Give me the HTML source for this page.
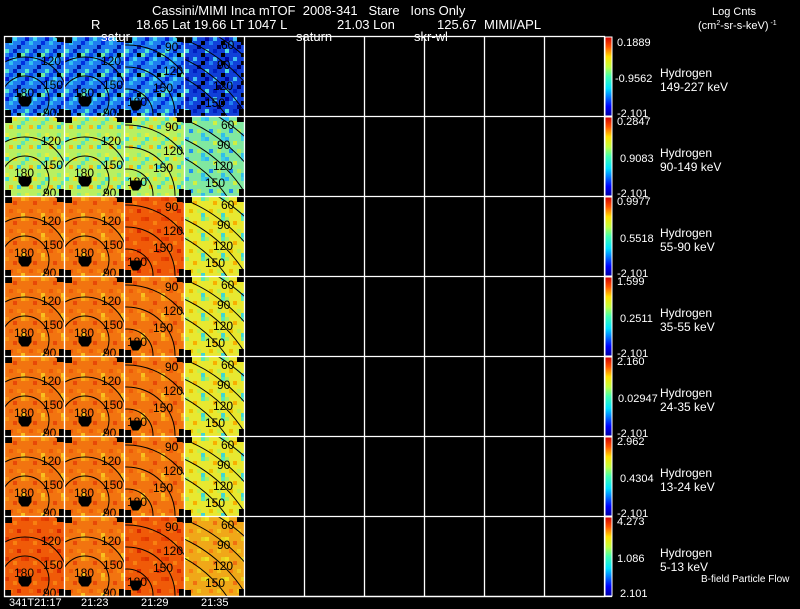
<!DOCTYPE html>
<html><head><meta charset="utf-8"><style>
html,body{margin:0;padding:0;background:#000;overflow:hidden;}
body{width:800px;height:609px;overflow:hidden;}
svg{display:block;}
svg text{font-family:"Liberation Sans",sans-serif;white-space:pre;}
</style></head><body>
<svg width="800" height="609" viewBox="0 0 800 609" xmlns="http://www.w3.org/2000/svg">
<defs>
<linearGradient id="jet" x1="0" y1="1" x2="0" y2="0">
<stop offset="0" stop-color="#0000a0"/><stop offset="0.12" stop-color="#0000ff"/>
<stop offset="0.35" stop-color="#00e0ff"/><stop offset="0.5" stop-color="#40ffb0"/>
<stop offset="0.62" stop-color="#c0ff40"/><stop offset="0.75" stop-color="#ffe000"/>
<stop offset="0.88" stop-color="#ff5000"/><stop offset="1" stop-color="#d00000"/>
</linearGradient>
<pattern id="nB" width="20" height="20" patternUnits="userSpaceOnUse">
<rect width="20" height="20" fill="#1f7df0"/>
<rect x="0" y="0" width="4" height="4" fill="#0018d0"/><rect x="8" y="0" width="4" height="4" fill="#40d8f0"/>
<rect x="16" y="4" width="4" height="4" fill="#0030e0"/><rect x="4" y="4" width="4" height="4" fill="#30c0f0"/>
<rect x="12" y="8" width="4" height="4" fill="#0010a0"/><rect x="0" y="12" width="4" height="4" fill="#50e8d0"/>
<rect x="8" y="12" width="4" height="4" fill="#0020c0"/><rect x="16" y="16" width="4" height="4" fill="#70f0a0"/>
<rect x="4" y="16" width="4" height="4" fill="#0040e8"/><rect x="12" y="16" width="4" height="4" fill="#000"/>
</pattern>
<pattern id="nD" width="20" height="20" patternUnits="userSpaceOnUse">
<rect width="20" height="20" fill="#1040d8"/>
<rect x="0" y="0" width="4" height="4" fill="#0008a0"/><rect x="8" y="0" width="4" height="4" fill="#40c0f0"/>
<rect x="16" y="4" width="4" height="4" fill="#000"/><rect x="4" y="4" width="4" height="4" fill="#2080f0"/>
<rect x="12" y="8" width="4" height="4" fill="#000060"/><rect x="0" y="12" width="4" height="4" fill="#50e0e0"/>
<rect x="8" y="12" width="4" height="4" fill="#0020c0"/><rect x="16" y="16" width="4" height="4" fill="#000"/>
</pattern>
<pattern id="nG" width="20" height="20" patternUnits="userSpaceOnUse">
<rect width="20" height="20" fill="#b8f060"/>
<rect x="0" y="0" width="4" height="4" fill="#40e0d0"/><rect x="8" y="0" width="4" height="4" fill="#f0e020"/>
<rect x="16" y="4" width="4" height="4" fill="#60e8b0"/><rect x="4" y="8" width="4" height="4" fill="#f8c010"/>
<rect x="12" y="8" width="4" height="4" fill="#30c8f0"/><rect x="0" y="16" width="4" height="4" fill="#e0f040"/>
<rect x="12" y="16" width="4" height="4" fill="#80f090"/>
</pattern>
<pattern id="nC" width="20" height="20" patternUnits="userSpaceOnUse">
<rect width="20" height="20" fill="#80e8a0"/>
<rect x="0" y="0" width="4" height="4" fill="#30b8f0"/><rect x="8" y="4" width="4" height="4" fill="#d0f040"/>
<rect x="16" y="0" width="4" height="4" fill="#40d0e0"/><rect x="4" y="12" width="4" height="4" fill="#2090f0"/>
<rect x="12" y="12" width="4" height="4" fill="#b0f060"/><rect x="16" y="16" width="4" height="4" fill="#30c0e8"/>
</pattern>
<pattern id="nY" width="20" height="20" patternUnits="userSpaceOnUse">
<rect width="20" height="20" fill="#e8e830"/>
<rect x="0" y="0" width="4" height="4" fill="#a8f060"/><rect x="8" y="4" width="4" height="4" fill="#f8b000"/>
<rect x="16" y="0" width="4" height="4" fill="#60e8b0"/><rect x="4" y="12" width="4" height="4" fill="#f0c000"/>
<rect x="12" y="12" width="4" height="4" fill="#c0f050"/><rect x="16" y="16" width="4" height="4" fill="#40d8d0"/>
</pattern>
<pattern id="nO" width="20" height="20" patternUnits="userSpaceOnUse">
<rect width="20" height="20" fill="#f27410"/>
<rect x="0" y="0" width="4" height="4" fill="#f89010"/><rect x="8" y="4" width="4" height="4" fill="#e84808"/>
<rect x="16" y="0" width="4" height="4" fill="#f8a818"/><rect x="4" y="12" width="4" height="4" fill="#ee5a08"/>
<rect x="12" y="12" width="4" height="4" fill="#f88a10"/><rect x="16" y="16" width="4" height="4" fill="#f8c020"/>
</pattern>
<pattern id="nR" width="20" height="20" patternUnits="userSpaceOnUse">
<rect width="20" height="20" fill="#f05a08"/>
<rect x="0" y="0" width="4" height="4" fill="#e03800"/><rect x="8" y="4" width="4" height="4" fill="#f88010"/>
<rect x="16" y="0" width="4" height="4" fill="#e84000"/><rect x="4" y="12" width="4" height="4" fill="#f07010"/>
<rect x="12" y="12" width="4" height="4" fill="#d82800"/>
</pattern>
<pattern id="nYO" width="20" height="20" patternUnits="userSpaceOnUse">
<rect width="20" height="20" fill="#f0a818"/>
<rect x="0" y="0" width="4" height="4" fill="#f0e020"/><rect x="8" y="4" width="4" height="4" fill="#f07010"/>
<rect x="16" y="0" width="4" height="4" fill="#e8d020"/><rect x="4" y="12" width="4" height="4" fill="#f88010"/>
<rect x="12" y="12" width="4" height="4" fill="#f0c820"/>
</pattern>
<g id="corn" fill="#000">
<rect x="0" y="0" width="7" height="6"/><rect x="52" y="0" width="8" height="5"/>
<rect x="0" y="73" width="6" height="7"/><rect x="54" y="72" width="6" height="8"/>
</g>
<g id="k1" fill="none" stroke="#000" stroke-width="1">
<circle cx="20" cy="63" r="24"/><circle cx="20" cy="63" r="43"/><circle cx="20" cy="63" r="70"/>
<path d="M14 60h12v5l-3 4h-6l-3-4z" fill="#000"/>
</g>
<g id="k1t" font-size="12" fill="#000" stroke="none">
<text x="36" y="28">120</text><text x="38" y="52">150</text><text x="9" y="60">180</text><text x="38" y="80">90</text>
</g>
<g id="k3" fill="none" stroke="#000" stroke-width="1">
<circle cx="2" cy="78" r="26"/><circle cx="2" cy="78" r="48"/><circle cx="2" cy="78" r="70"/><circle cx="2" cy="78" r="92"/>
<path d="M6 64h10v5l-3 4h-5l-2-4z" fill="#000"/>
</g>
<g id="k3t" font-size="12" fill="#000" stroke="none">
<text x="40" y="14">90</text><text x="38" y="38">120</text><text x="28" y="55">150</text><text x="2" y="69">180</text>
</g>
<g id="k4" fill="none" stroke="#000" stroke-width="1">
<circle cx="-60" cy="150" r="124"/><circle cx="-60" cy="150" r="141"/><circle cx="-60" cy="150" r="159"/><circle cx="-60" cy="150" r="177"/>
</g>
<g id="k4t" font-size="12" fill="#000" stroke="none">
<text x="36" y="12">60</text><text x="32" y="32">90</text><text x="28" y="53">120</text><text x="20" y="70">150</text>
</g>
</defs>

<g>
<svg x="5" y="37" width="59" height="79"><rect width="60" height="80" fill="url(#nB)"/><use href="#corn"/><use href="#k1"/><use href="#k1t"/></svg>
<svg x="65" y="37" width="59" height="79"><rect width="60" height="80" fill="url(#nB)"/><use href="#corn"/><use href="#k1"/><use href="#k1t"/></svg>
<svg x="125" y="37" width="59" height="79"><rect width="60" height="80" fill="url(#nB)"/><use href="#corn"/><use href="#k3"/><use href="#k3t"/></svg>
<svg x="185" y="37" width="59" height="79"><rect width="60" height="80" fill="url(#nD)"/><use href="#corn"/><use href="#k4"/><use href="#k4t"/></svg>
<svg x="5" y="117" width="59" height="79"><rect width="60" height="80" fill="url(#nG)"/><use href="#corn"/><use href="#k1"/><use href="#k1t"/></svg>
<svg x="65" y="117" width="59" height="79"><rect width="60" height="80" fill="url(#nG)"/><use href="#corn"/><use href="#k1"/><use href="#k1t"/></svg>
<svg x="125" y="117" width="59" height="79"><rect width="60" height="80" fill="url(#nG)"/><use href="#corn"/><use href="#k3"/><use href="#k3t"/></svg>
<svg x="185" y="117" width="59" height="79"><rect width="60" height="80" fill="url(#nC)"/><use href="#corn"/><use href="#k4"/><use href="#k4t"/></svg>
<svg x="5" y="197" width="59" height="79"><rect width="60" height="80" fill="url(#nO)"/><use href="#corn"/><use href="#k1"/><use href="#k1t"/></svg>
<svg x="65" y="197" width="59" height="79"><rect width="60" height="80" fill="url(#nO)"/><use href="#corn"/><use href="#k1"/><use href="#k1t"/></svg>
<svg x="125" y="197" width="59" height="79"><rect width="60" height="80" fill="url(#nR)"/><use href="#corn"/><use href="#k3"/><use href="#k3t"/></svg>
<svg x="185" y="197" width="59" height="79"><rect width="60" height="80" fill="url(#nY)"/><use href="#corn"/><use href="#k4"/><use href="#k4t"/></svg>
<svg x="5" y="277" width="59" height="79"><rect width="60" height="80" fill="url(#nO)"/><use href="#corn"/><use href="#k1"/><use href="#k1t"/></svg>
<svg x="65" y="277" width="59" height="79"><rect width="60" height="80" fill="url(#nO)"/><use href="#corn"/><use href="#k1"/><use href="#k1t"/></svg>
<svg x="125" y="277" width="59" height="79"><rect width="60" height="80" fill="url(#nO)"/><use href="#corn"/><use href="#k3"/><use href="#k3t"/></svg>
<svg x="185" y="277" width="59" height="79"><rect width="60" height="80" fill="url(#nY)"/><use href="#corn"/><use href="#k4"/><use href="#k4t"/></svg>
<svg x="5" y="357" width="59" height="79"><rect width="60" height="80" fill="url(#nO)"/><use href="#corn"/><use href="#k1"/><use href="#k1t"/></svg>
<svg x="65" y="357" width="59" height="79"><rect width="60" height="80" fill="url(#nO)"/><use href="#corn"/><use href="#k1"/><use href="#k1t"/></svg>
<svg x="125" y="357" width="59" height="79"><rect width="60" height="80" fill="url(#nO)"/><use href="#corn"/><use href="#k3"/><use href="#k3t"/></svg>
<svg x="185" y="357" width="59" height="79"><rect width="60" height="80" fill="url(#nY)"/><use href="#corn"/><use href="#k4"/><use href="#k4t"/></svg>
<svg x="5" y="437" width="59" height="79"><rect width="60" height="80" fill="url(#nO)"/><use href="#corn"/><use href="#k1"/><use href="#k1t"/></svg>
<svg x="65" y="437" width="59" height="79"><rect width="60" height="80" fill="url(#nO)"/><use href="#corn"/><use href="#k1"/><use href="#k1t"/></svg>
<svg x="125" y="437" width="59" height="79"><rect width="60" height="80" fill="url(#nO)"/><use href="#corn"/><use href="#k3"/><use href="#k3t"/></svg>
<svg x="185" y="437" width="59" height="79"><rect width="60" height="80" fill="url(#nY)"/><use href="#corn"/><use href="#k4"/><use href="#k4t"/></svg>
<svg x="5" y="517" width="59" height="79"><rect width="60" height="80" fill="url(#nR)"/><use href="#corn"/><use href="#k1"/><use href="#k1t"/></svg>
<svg x="65" y="517" width="59" height="79"><rect width="60" height="80" fill="url(#nO)"/><use href="#corn"/><use href="#k1"/><use href="#k1t"/></svg>
<svg x="125" y="517" width="59" height="79"><rect width="60" height="80" fill="url(#nR)"/><use href="#corn"/><use href="#k3"/><use href="#k3t"/></svg>
<svg x="185" y="517" width="59" height="79"><rect width="60" height="80" fill="url(#nYO)"/><use href="#corn"/><use href="#k4"/><use href="#k4t"/></svg>
</g>

<g stroke="#fff" stroke-width="1.3" fill="none">
<rect x="4.5" y="36.5" width="600" height="560"/>
<path d="M64.5 36v560M124.5 36v560M184.5 36v560M244.5 36v560M304.5 36v560M364.5 36v560M424.5 36v560M484.5 36v560M544.5 36v560"/>
<path d="M4 116.5h608M4 196.5h608M4 276.5h608M4 356.5h608M4 436.5h608M4 516.5h608M4 596.5h608"/>
</g>

<g stroke="#fff" stroke-width="1">
<rect x="605" y="37" width="7" height="79" fill="url(#jet)"/>
<rect x="605" y="117" width="7" height="79" fill="url(#jet)"/>
<rect x="605" y="197" width="7" height="79" fill="url(#jet)"/>
<rect x="605" y="277" width="7" height="79" fill="url(#jet)"/>
<rect x="605" y="357" width="7" height="79" fill="url(#jet)"/>
<rect x="605" y="437" width="7" height="79" fill="url(#jet)"/>
<rect x="605" y="517" width="7" height="79" fill="url(#jet)"/>
</g>

<g fill="#fff" font-size="11">
<text x="617" y="46">0.1889</text><text x="615" y="82">-0.9562</text><text x="617" y="117">-2.101</text>
<text x="617" y="125">0.2847</text><text x="620" y="162">0.9083</text><text x="617" y="197">-2.101</text>
<text x="617" y="205">0.9977</text><text x="620" y="242">0.5518</text><text x="617" y="277">-2.101</text>
<text x="617" y="285">1.599</text><text x="620" y="322">0.2511</text><text x="617" y="357">-2.101</text>
<text x="617" y="365">2.160</text><text x="618" y="402">0.02947</text><text x="617" y="437">-2.101</text>
<text x="617" y="445">2.962</text><text x="620" y="482">0.4304</text><text x="617" y="517">-2.101</text>
<text x="617" y="525">4.273</text><text x="617" y="562">1.086</text><text x="620" y="597">2.101</text>
</g>
<g fill="#fff" font-size="12">
<text x="660" y="77">Hydrogen</text><text x="660" y="91">149-227 keV</text>
<text x="660" y="157">Hydrogen</text><text x="660" y="171">90-149 keV</text>
<text x="660" y="237">Hydrogen</text><text x="660" y="251">55-90 keV</text>
<text x="660" y="317">Hydrogen</text><text x="660" y="331">35-55 keV</text>
<text x="660" y="397">Hydrogen</text><text x="660" y="411">24-35 keV</text>
<text x="660" y="477">Hydrogen</text><text x="660" y="491">13-24 keV</text>
<text x="660" y="557">Hydrogen</text><text x="660" y="571">5-13 keV</text>
</g>
<text x="701" y="582" fill="#fff" font-size="10">B-field Particle Flow</text>
<text x="712" y="15" fill="#fff" font-size="11">Log Cnts</text>
<text x="698" y="29" fill="#fff" font-size="11">(cm<tspan font-size="7" dy="-4">2</tspan><tspan dy="4">-sr-s-keV)</tspan><tspan font-size="7" dy="-4"> -1</tspan></text>

<g fill="#fff" font-size="13">
<text x="152" y="15">Cassini/MIMI Inca mTOF  2008-341   Stare   Ions Only</text>
<text x="91" y="29">R</text>
<text x="136" y="29">18.65 Lat 19.66 LT 1047 L</text>
<text x="337" y="29">21.03 Lon</text>
<text x="437" y="29">125.67  MIMI/APL</text>
<text x="101" y="41">satur</text>
<text x="296" y="41">saturn</text>
<text x="414" y="41">skr-wl</text>
</g>
<g fill="#fff" font-size="11">
<text x="9" y="606">341T21:17</text><text x="81" y="606">21:23</text><text x="141" y="606">21:29</text><text x="201" y="606">21:35</text>
</g>
</svg>
</body></html>
